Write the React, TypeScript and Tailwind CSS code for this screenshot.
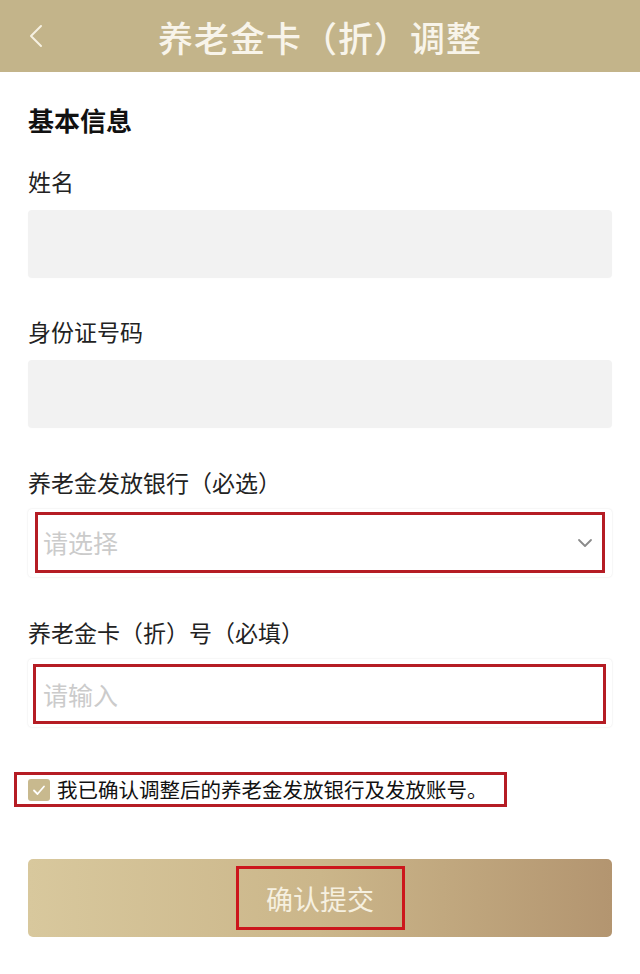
import React, { useState } from 'react';

const FONT = { fontFamily: '"Noto Sans CJK SC", "Noto Sans", sans-serif' };

const Label = ({ text, className = '' }: { text: string; className?: string }) => (
  <div className={`text-[23px] leading-[23px] text-[#222] ${className}`}>{text}</div>
);

const GrayInput = ({ className = '' }: { className?: string }) => (
  <div className={`h-[67px] rounded-[4px] bg-[#f2f2f2] shadow-[0_1px_1px_rgba(0,0,0,0.06)] ${className}`} />
);

export default function App() {
  const [checked, setChecked] = useState(true);

  return (
    <div className="w-[640px] h-[974px] bg-white overflow-hidden" style={FONT}>
      {/* header */}
      <div className="relative h-[72px] bg-[#c3b48a] flex items-center justify-center">
        <svg className="absolute left-[27px] top-[24px]" width="18" height="24" viewBox="0 0 18 24" fill="none">
          <path d="M14 2 L4 12 L14 22" stroke="#f6f1e2" strokeWidth="2" strokeLinecap="round" strokeLinejoin="round" />
        </svg>
        <div className="text-[35px] leading-none text-[#f8f4ea] tracking-[1px] font-medium">养老金卡（折）调整</div>
      </div>

      <div className="px-[28px] pt-[35px]">
        <div className="text-[26px] leading-[26px] font-bold text-[#111]">基本信息</div>

        <Label text="姓名" className="mt-[37px]" />
        <GrayInput className="mt-[17px]" />

        <Label text="身份证号码" className="mt-[43px]" />
        <GrayInput className="mt-[17px]" />

        <Label text="养老金发放银行（必选）" className="mt-[44px]" />
        <div className="mt-[15px] h-[68px] rounded-[4px] bg-white shadow-[0_0_2px_rgba(0,0,0,0.12)] px-[7px] pt-[3px] pb-[4px]">
          <div className="h-full border-[3px] border-[#b51c24] flex items-center justify-between pl-[5px] pr-[9px]">
            <span className="text-[25px] leading-none text-[#cbcbcb]">请选择</span>
            <svg width="16" height="10" viewBox="0 0 16 10" fill="none">
              <path d="M2 2 L8 8 L14 2" stroke="#8a8a8a" strokeWidth="1.8" strokeLinecap="round" strokeLinejoin="round" />
            </svg>
          </div>
        </div>

        <Label text="养老金卡（折）号（必填）" className="mt-[44px]" />
        <div className="mt-[15px] h-[68px] rounded-[4px] bg-white shadow-[0_0_2px_rgba(0,0,0,0.12)] pl-[5px] pr-[6px] pt-[5px] pb-[3px]">
          <div className="h-full border-[3px] border-[#b51c24] flex items-center pl-[7px]">
            <span className="text-[25px] leading-none text-[#cbcbcb]">请输入</span>
          </div>
        </div>
      </div>

      {/* agreement */}
      <div className="mt-[45px] ml-[14px] w-[493px] h-[35px] border-[3px] border-[#b51c24] flex items-center pl-[11px]">
        <button
          onClick={() => setChecked(!checked)}
          className={`w-[22px] h-[22px] rounded-[3px] flex items-center justify-center ${checked ? 'bg-[#c8b98e]' : 'bg-white border border-[#ccc]'}`}
        >
          {checked && (
            <svg width="14" height="12" viewBox="0 0 14 12" fill="none">
              <path d="M2 6.5 L5.5 10 L12 2.5" stroke="#fff" strokeWidth="1.8" strokeLinecap="round" strokeLinejoin="round" />
            </svg>
          )}
        </button>
        <span className="ml-[7px] text-[20.5px] leading-none text-[#111]">我已确认调整后的养老金发放银行及发放账号。</span>
      </div>

      {/* submit */}
      <div className="px-[28px] mt-[52px]">
        <div className="h-[78px] rounded-[5px] bg-gradient-to-r from-[#d8c89d] via-[#cbb68a] to-[#b39570] flex items-center justify-center">
          <div className="w-[169px] h-[64px] border-[3px] border-[#cc161c] flex items-center justify-center">
            <span className="text-[27px] leading-none text-[#f6f0e0]">确认提交</span>
          </div>
        </div>
      </div>
    </div>
  );
}
